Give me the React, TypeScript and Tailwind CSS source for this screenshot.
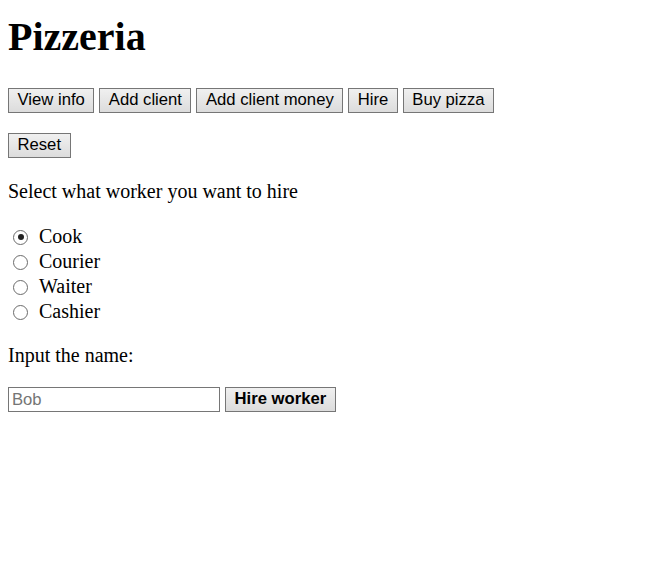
import { useState } from 'react';

const buttonClass =
  'h-[25px] px-[8.5px] border border-[#767676] bg-gradient-to-b from-[#f0f0f0] to-[#dcdcdc] text-[16.67px] leading-none text-black font-["Liberation_Sans",Arial,sans-serif]';

const workers = ['Cook', 'Courier', 'Waiter', 'Cashier'];

export default function App() {
  const [worker, setWorker] = useState('Cook');

  return (
    <div className="min-h-[577px] bg-white px-2 pt-2 text-[20px] text-black font-['Liberation_Serif','Times_New_Roman',serif]">
      <h1 className="mt-[6px] text-[40px] font-bold leading-[46px]">Pizzeria</h1>

      <div className="mt-[28px] flex gap-[5px]">
        <button className={buttonClass}>View info</button>
        <button className={buttonClass}>Add client</button>
        <button className={buttonClass}>Add client money</button>
        <button className={buttonClass}>Hire</button>
        <button className={buttonClass}>Buy pizza</button>
      </div>

      <div className="mt-[20px] flex">
        <button className={buttonClass}>Reset</button>
      </div>

      <p className="mt-[22px] leading-[23px]">Select what worker you want to hire</p>

      <div className="mt-[21px] flex flex-col">
        {workers.map((w) => (
          <label key={w} className="flex h-[25px] cursor-pointer items-center" onClick={() => setWorker(w)}>
            <span className="ml-[5px] mt-[1px] flex h-[15px] w-[15px] items-center justify-center rounded-full border-[1.5px] border-[#6b6b6b] bg-white">
              {worker === w && <span className="h-[6px] w-[6px] rounded-full bg-[#222]" />}
            </span>
            <span className="ml-[11px] leading-[25px]">{w}</span>
          </label>
        ))}
      </div>

      <p className="mt-[20px] leading-[23px]">Input the name:</p>

      <div className="mt-[20px] flex gap-[5px]">
        <input
          placeholder="Bob"
          className="h-[25px] w-[212px] border border-[#767676] px-[3px] text-[16.67px] font-['Liberation_Sans',Arial,sans-serif] placeholder:text-[#757575] outline-none"
        />
        <button className={`${buttonClass} font-bold`}>Hire worker</button>
      </div>
    </div>
  );
}
